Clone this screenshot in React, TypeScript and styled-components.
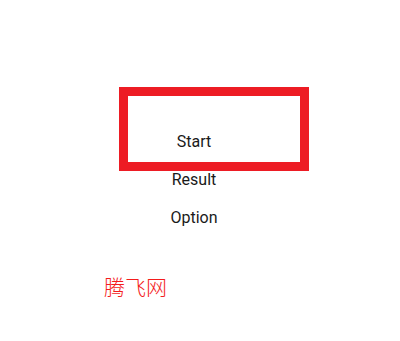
import React from 'react';
import styled, { createGlobalStyle } from 'styled-components';

const GlobalStyle = createGlobalStyle`
  html, body {
    margin: 0;
    padding: 0;
    background: #ffffff;
  }
  body {
    font-family: Roboto, "Noto Sans", sans-serif;
  }
`;

const Screen = styled.div`
  position: relative;
  width: 400px;
  height: 341px;
  overflow: hidden;
  background: #ffffff;
  display: flex;
  flex-direction: column;
`;

const Menu = styled.ul`
  list-style: none;
  margin: 123px 0 0;
  padding: 0 12px 0 0;
  display: flex;
  flex-direction: column;
  align-items: center;
`;

const MenuItem = styled.li`
  height: 38px;
  line-height: 38px;
  font-size: 16px;
  color: #1a1a1a;
  text-align: center;
`;

const FocusFrame = styled.div`
  position: absolute;
  left: 119px;
  top: 87px;
  width: 190px;
  height: 84px;
  box-sizing: border-box;
  border: 9px solid #ed1c24;
  pointer-events: none;
`;

const Brand = styled.div`
  margin: 39px 0 0 104px;
  font-family: "Noto Sans CJK SC", sans-serif;
  font-weight: 300;
  font-size: 21px;
  line-height: 21px;
  color: #f41c1c;
`;

const items = ['Start', 'Result', 'Option'];

const App = (): JSX.Element => {
  return (
    <>
      <GlobalStyle />
      <Screen>
        <Menu>
          {items.map((label) => (
            <MenuItem key={label}>{label}</MenuItem>
          ))}
        </Menu>
        <Brand>腾飞网</Brand>
        <FocusFrame />
      </Screen>
    </>
  );
};

export default App;
